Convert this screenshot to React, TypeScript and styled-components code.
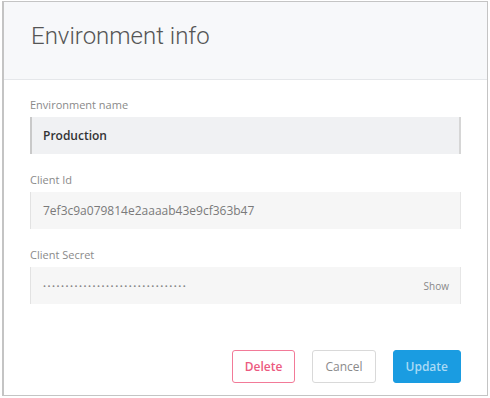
import styled, { createGlobalStyle } from "styled-components";

const Global = createGlobalStyle`
  body {
    margin: 0;
    background: #fff;
    font-family: "Open Sans", "Liberation Sans", sans-serif;
  }
`;

const Card = styled.div`
  margin: 1px 2px;
  width: 486px;
  height: 395px;
  box-sizing: border-box;
  border: 1px solid #c4c4c4;
  border-left-width: 2px;
  display: flex;
  flex-direction: column;
`;

const Header = styled.div`
  height: 78px;
  box-sizing: border-box;
  background: #f7f8fa;
  border-bottom: 1px solid #e5e7ea;
  padding: 19px 0 0 27px;
`;

const Title = styled.h1`
  margin: 0;
  font-family: Roboto, "Liberation Sans", sans-serif;
  font-weight: 300;
  font-size: 24px;
  line-height: 30px;
  color: #555;
`;

const Body = styled.div`
  flex: 1;
  padding: 18px 26px 0 26px;
  display: flex;
  flex-direction: column;
  gap: 19px;
`;

const Field = styled.div`
  display: flex;
  flex-direction: column;
  gap: 5px;
`;

const Label = styled.label`
  font-size: 11px;
  line-height: 14px;
  color: #8a8a8a;
`;

const Input = styled.div<{ $active?: boolean }>`
  height: 37px;
  box-sizing: border-box;
  display: flex;
  align-items: center;
  justify-content: space-between;
  padding: 0 11px 0 ${({ $active }) => ($active ? "11px" : "12px")};
  background: ${({ $active }) => ($active ? "#f0f1f3" : "#f6f6f6")};
  border-left: ${({ $active }) => ($active ? "2px solid #c9c9c9" : "1px solid #e2e2e2")};
  border-right: ${({ $active }) => ($active ? "2px solid #d6d6d6" : "1px solid #e6e6e6")};
  font-size: 12px;
  color: ${({ $active }) => ($active ? "#333" : "#7a7a7a")};
  font-weight: ${({ $active }) => ($active ? 600 : 400)};
`;

const Dots = styled.span`
  font-size: 8px;
  letter-spacing: 1.5px;
  color: #888;
`;

const ShowLink = styled.span`
  font-size: 10px;
  color: #888;
`;

const Footer = styled.div`
  display: flex;
  justify-content: flex-end;
  gap: 17px;
  padding: 0 26px 12px 0;
`;

const Button = styled.button<{ $variant: "danger" | "default" | "primary" }>`
  height: 33px;
  box-sizing: border-box;
  padding: 0 12px;
  border-radius: 3px;
  font-family: "Open Sans", "Liberation Sans", sans-serif;
  font-size: 12px;
  font-weight: ${({ $variant }) => ($variant === "default" ? 400 : 600)};
  background: ${({ $variant }) => ($variant === "primary" ? "#1a9ce1" : "#fff")};
  border: 1px solid
    ${({ $variant }) =>
      $variant === "danger" ? "#f27a98" : $variant === "primary" ? "#1a9ce1" : "#d9d9d9"};
  color: ${({ $variant }) =>
    $variant === "danger" ? "#ec5a80" : $variant === "primary" ? "#a9daf5" : "#8a8a8a"};
`;

export default function App() {
  return (
    <>
      <Global />
      <Card>
        <Header>
          <Title>Environment info</Title>
        </Header>
        <Body>
          <Field>
            <Label>Environment name</Label>
            <Input $active>Production</Input>
          </Field>
          <Field>
            <Label>Client Id</Label>
            <Input>7ef3c9a079814e2aaaab43e9cf363b47</Input>
          </Field>
          <Field>
            <Label>Client Secret</Label>
            <Input>
              <Dots>{"•".repeat(32)}</Dots>
              <ShowLink>Show</ShowLink>
            </Input>
          </Field>
        </Body>
        <Footer>
          <Button $variant="danger">Delete</Button>
          <Button $variant="default">Cancel</Button>
          <Button $variant="primary">Update</Button>
        </Footer>
      </Card>
    </>
  );
}
